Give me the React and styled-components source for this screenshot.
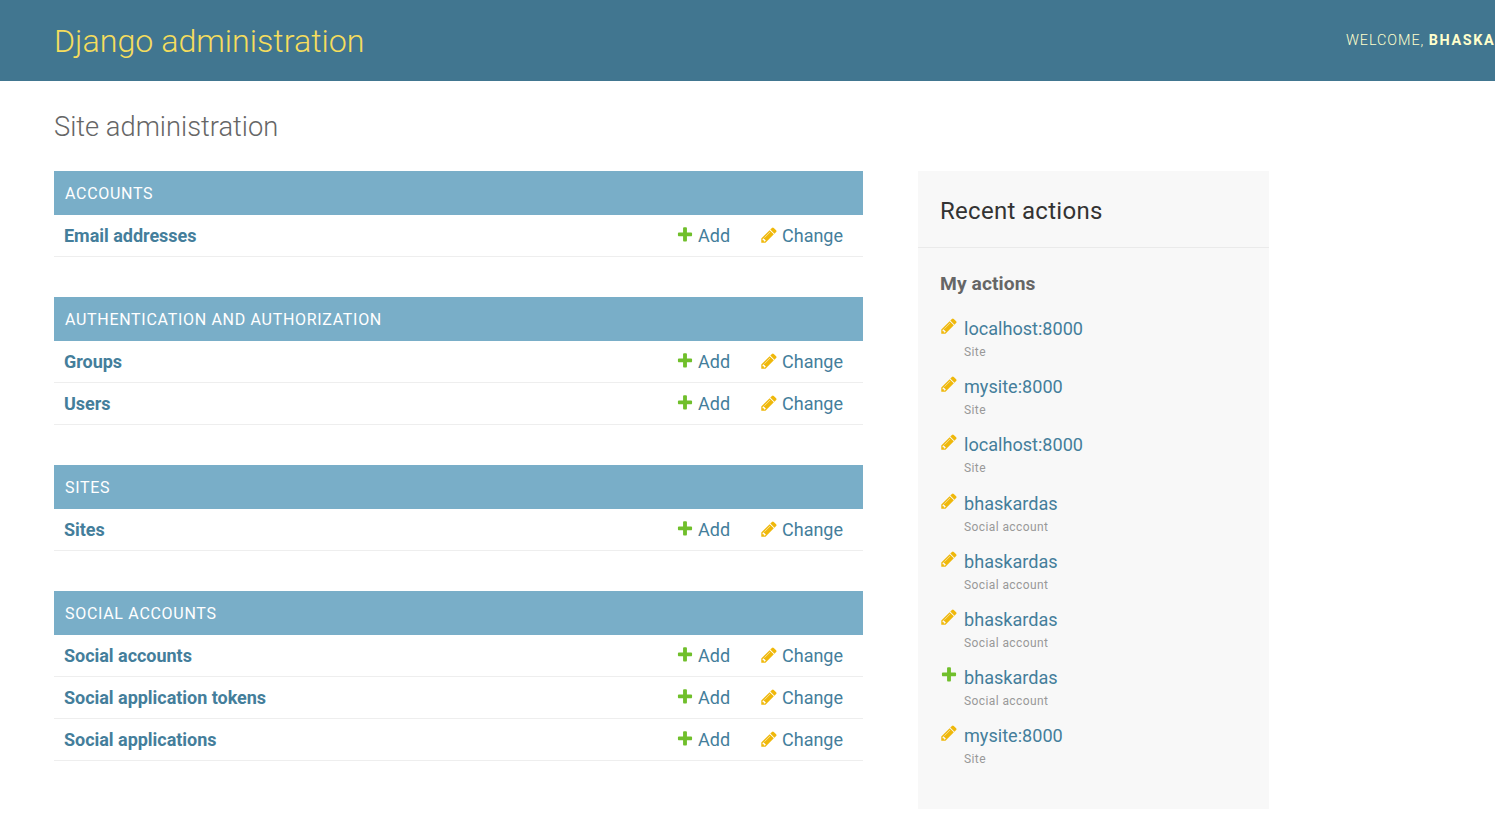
import React from 'react';
import styled, { createGlobalStyle } from 'styled-components';

const GlobalStyle = createGlobalStyle`
  html, body {
    margin: 0;
    padding: 0;
    background: #fff;
    overflow: hidden;
    font-family: Roboto, "Lucida Grande", Verdana, Arial, sans-serif;
    color: #333;
  }
`;

const Header = styled.header`
  display: flex;
  align-items: center;
  height: 81px;
  padding-left: 54px;
  background: #417690;
  overflow: hidden;
  white-space: nowrap;
`;

const Branding = styled.h1`
  flex: 0 0 1292px;
  margin: 0;
  padding-top: 1px;
  font-size: 32.2px;
  font-weight: 300;
  color: #f5dd5d;
`;

const UserTools = styled.div`
  flex-shrink: 0;
  font-size: 14.4px;
  font-weight: 300;
  letter-spacing: 0.95px;
  text-transform: uppercase;
  color: #ffc;

  strong {
    font-weight: 700;
    letter-spacing: 1.6px;
  }
`;

const Content = styled.main`
  padding: 0 54px;
`;

const Title = styled.h2`
  margin: 0;
  padding-top: 29px;
  height: 62px;
  box-sizing: border-box;
  line-height: 34px;
  font-size: 27.3px;
  font-weight: 300;
  color: #666;
`;

const Columns = styled.div`
  display: flex;
  align-items: flex-start;
  margin-top: 28px;
  gap: 55px;
`;

const AppList = styled.div`
  width: 809px;
`;

const Module = styled.section`
  margin-bottom: 40px;
`;

const Caption = styled.div`
  display: flex;
  align-items: center;
  height: 44px;
  padding-left: 11px;
  background: #79aec8;
  color: #fff;
  font-size: 16px;
  font-weight: 400;
  letter-spacing: 0.7px;
  text-transform: uppercase;
`;

const Row = styled.div`
  display: flex;
  align-items: center;
  height: 42px;
  box-sizing: border-box;
  border-bottom: 1px solid #eee;
  padding-left: 10px;
  font-size: 18px;
`;

const ModelName = styled.a`
  flex: 1;
  color: #447e9b;
  font-weight: 700;
  letter-spacing: -0.03px;
`;

const RowAction = styled.a`
  display: flex;
  align-items: center;
  width: ${(p) => p.$width}px;
  color: #447e9b;
  font-size: 18px;
  font-weight: 400;

  svg {
    flex-shrink: 0;
    margin-right: 4.5px;
    margin-bottom: 2px;
  }
`;

const Sidebar = styled.aside`
  width: 351px;
  height: 638px;
  background: #f8f8f8;
`;

const SidebarTitle = styled.h2`
  display: flex;
  align-items: center;
  height: 73px;
  margin: 0;
  padding: 3px 0 0 22px;
  border-bottom: 1px solid #eaeaea;
  font-size: 24px;
  font-weight: 400;
  letter-spacing: 0.3px;
  color: #333;
`;

const SidebarSection = styled.div`
  padding: 24px 22px 0;
`;

const SidebarHeading = styled.h3`
  margin: 0 0 21px;
  line-height: 24px;
  font-size: 19.2px;
  font-weight: 700;
  letter-spacing: 0.1px;
  color: #666;
`;

const ActionList = styled.ul`
  margin: 0;
  padding: 0;
  list-style: none;
`;

const ActionItem = styled.li`
  display: flex;
  height: 58.2px;
`;

const ActionIcon = styled.span`
  flex: 0 0 24px;
`;

const ActionName = styled.a`
  display: block;
  line-height: 24px;
  font-size: 18.1px;
  color: #447e9b;
`;

const ActionType = styled.div`
  margin-top: 4px;
  line-height: 14px;
  font-size: 12px;
  letter-spacing: 0.4px;
  color: #999;
`;

const AddIcon = () => (
  <svg width={18} height={18} viewBox="0 0 1792 1792">
    <path
      fill="#70bf2b"
      d="M1600 736v192q0 40-28 68t-68 28h-416v416q0 40-28 68t-68 28h-192q-40 0-68-28t-28-68v-416h-416q-40 0-68-28t-28-68v-192q0-40 28-68t68-28h416v-416q0-40 28-68t68-28h192q40 0 68 28t28 68v416h416q40 0 68 28t28 68z"
    />
  </svg>
);

const ChangeIcon = () => (
  <svg width={18} height={18} viewBox="0 0 1792 1792">
    <path
      fill="#efb80b"
      d="M491 1536l91-91-235-235-91 91v107h128v128h107zm523-928q0-22-22-22-10 0-17 7l-542 542q-7 7-7 17 0 22 22 22 10 0 17-7l542-542q7-7 7-17zm-54-192l416 416-832 832h-416v-416zm683 96q0 53-37 90l-166 166-416-416 166-165q36-38 90-38 53 0 91 38l235 234q37 39 37 91z"
    />
  </svg>
);

const modules = [
  { name: 'Accounts', models: ['Email addresses'] },
  { name: 'Authentication and Authorization', models: ['Groups', 'Users'] },
  { name: 'Sites', models: ['Sites'] },
  {
    name: 'Social Accounts',
    models: ['Social accounts', 'Social application tokens', 'Social applications'],
  },
];

const actions = [
  { name: 'localhost:8000', type: 'Site' },
  { name: 'mysite:8000', type: 'Site' },
  { name: 'localhost:8000', type: 'Site' },
  { name: 'bhaskardas', type: 'Social account' },
  { name: 'bhaskardas', type: 'Social account' },
  { name: 'bhaskardas', type: 'Social account' },
  { name: 'bhaskardas', type: 'Social account', added: true },
  { name: 'mysite:8000', type: 'Site' },
];

const App = () => {
  return (
    <div>
      <GlobalStyle />
      <Header>
        <Branding>Django administration</Branding>
        <UserTools>
          Welcome, <strong>bhaskardas</strong>
        </UserTools>
      </Header>
      <Content>
        <Title>Site administration</Title>
        <Columns>
          <AppList>
            {modules.map((mod) => (
              <Module key={mod.name}>
                <Caption>{mod.name}</Caption>
                {mod.models.map((model) => (
                  <Row key={model}>
                    <ModelName>{model}</ModelName>
                    <RowAction $width={84}>
                      <AddIcon />
                      Add
                    </RowAction>
                    <RowAction $width={103.5}>
                      <ChangeIcon />
                      Change
                    </RowAction>
                  </Row>
                ))}
              </Module>
            ))}
          </AppList>
          <Sidebar>
            <SidebarTitle>Recent actions</SidebarTitle>
            <SidebarSection>
              <SidebarHeading>My actions</SidebarHeading>
              <ActionList>
                {actions.map((action, i) => (
                  <ActionItem key={i}>
                    <ActionIcon>{action.added ? <AddIcon /> : <ChangeIcon />}</ActionIcon>
                    <div>
                      <ActionName>{action.name}</ActionName>
                      <ActionType>{action.type}</ActionType>
                    </div>
                  </ActionItem>
                ))}
              </ActionList>
            </SidebarSection>
          </Sidebar>
        </Columns>
      </Content>
    </div>
  );
};

export default App;
